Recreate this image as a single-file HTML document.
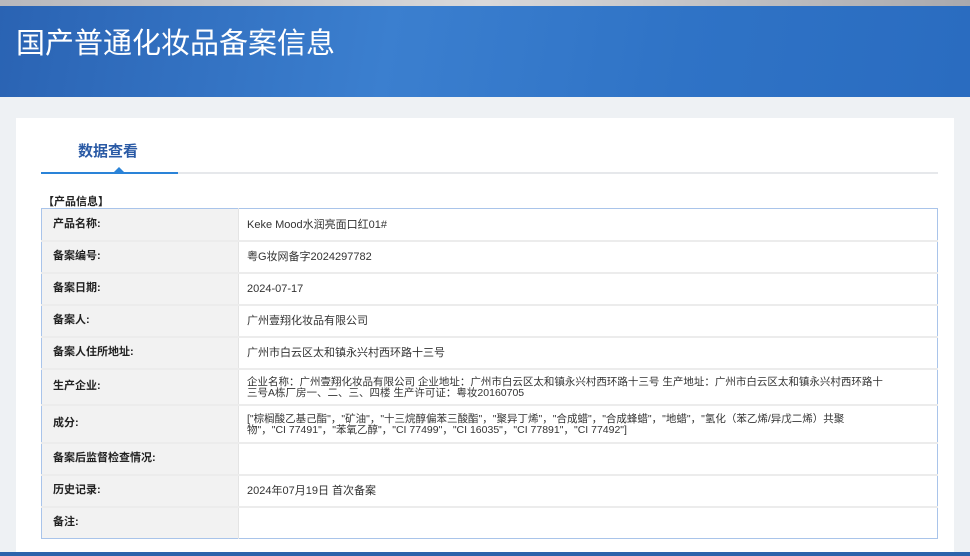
<!DOCTYPE html>
<html><head><meta charset="utf-8"><style>
*{margin:0;padding:0;box-sizing:border-box}
body{width:970px;height:556px;overflow:hidden;background:#eef1f4;font-family:"Liberation Sans","Noto Sans CJK SC",sans-serif;position:relative}
.top{position:absolute;left:0;top:0;width:970px;height:6px;background:linear-gradient(90deg,#b8b8bc,#d8d8da 50%,#a9a9ad)}
.ban{position:absolute;left:0;top:6px;width:970px;height:91px;background:linear-gradient(100deg,#2a63b3 0%,#3b7fcf 40%,#2f73c6 70%,#2a6cc0 100%)}
.ban h1{position:absolute;left:16px;top:14px;color:#fff;font-size:29px;font-weight:normal;font-family:"Noto Sans CJK SC",sans-serif}
.card{position:absolute;left:16px;top:118px;width:938px;height:438px;background:#fff}
.tab{position:absolute;left:62px;top:22px;font-size:15px;font-weight:bold;color:#2a5aa5;font-family:"Noto Sans CJK SC",sans-serif}
.ul{position:absolute;left:25px;top:54px;width:897px;height:2px;background:#e6e8eb}
.ul b{position:absolute;left:0;top:0;width:137px;height:2px;background:#2a83d8}
.tri{position:absolute;left:98px;top:49px;width:0;height:0;border-left:5px solid transparent;border-right:5px solid transparent;border-bottom:5px solid #2a83d8}
.sec{position:absolute;left:27px;top:75px;font-size:11px;font-weight:bold;color:#222;font-family:"Noto Sans CJK SC",sans-serif}
table{position:absolute;left:25px;top:90px;width:897px;border-collapse:collapse;border:1px solid #a9c4ea;font-size:11px;color:#333;font-family:"Liberation Sans","Noto Sans CJK SC",sans-serif}
td{border-bottom:2px solid #ececec;height:32px;vertical-align:middle;line-height:11px}
td.l{width:197px;background:#f2f2f2;font-weight:bold;font-size:11px;padding-left:11px;color:#222;border-right:1px solid #e4e4e4}
td.v{padding-left:8px;padding-top:2px}
td.s{font-size:10.5px}
.bot{position:absolute;left:0;top:552px;width:970px;height:4px;background:#2c63ab}
</style></head><body>
<div class="top"></div>
<div class="ban"><h1>国产普通化妆品备案信息</h1></div>
<div class="card">
<div class="tab">数据查看</div>
<div class="ul"><b></b></div><div class="tri"></div>
<div class="sec">【产品信息】</div>
<table>
<tr><td class="l">产品名称:</td><td class="v">Keke Mood水润亮面口红01#</td></tr>
<tr><td class="l">备案编号:</td><td class="v">粤G妆网备字2024297782</td></tr>
<tr><td class="l">备案日期:</td><td class="v">2024-07-17</td></tr>
<tr><td class="l">备案人:</td><td class="v">广州壹翔化妆品有限公司</td></tr>
<tr><td class="l">备案人住所地址:</td><td class="v">广州市白云区太和镇永兴村西环路十三号</td></tr>
<tr><td class="l" style="height:36px">生产企业:</td><td class="v s">企业名称：广州壹翔化妆品有限公司 企业地址：广州市白云区太和镇永兴村西环路十三号 生产地址：广州市白云区太和镇永兴村西环路十<br>三号A栋厂房一、二、三、四楼 生产许可证：粤妆20160705</td></tr>
<tr><td class="l" style="height:38px">成分:</td><td class="v s">["棕榈酸乙基己酯"，"矿油"，"十三烷醇偏苯三酸酯"，"聚异丁烯"，"合成蜡"，"合成蜂蜡"，"地蜡"，"氢化（苯乙烯/异戊二烯）共聚<br>物"，"CI 77491"，"苯氧乙醇"，"CI 77499"，"CI 16035"，"CI 77891"，"CI 77492"]</td></tr>
<tr><td class="l">备案后监督检查情况:</td><td class="v"></td></tr>
<tr><td class="l">历史记录:</td><td class="v">2024年07月19日 首次备案</td></tr>
<tr><td class="l" style="border-bottom:none">备注:</td><td class="v" style="border-bottom:none"></td></tr>
</table>
</div>
<div class="bot"></div>
</body></html>
